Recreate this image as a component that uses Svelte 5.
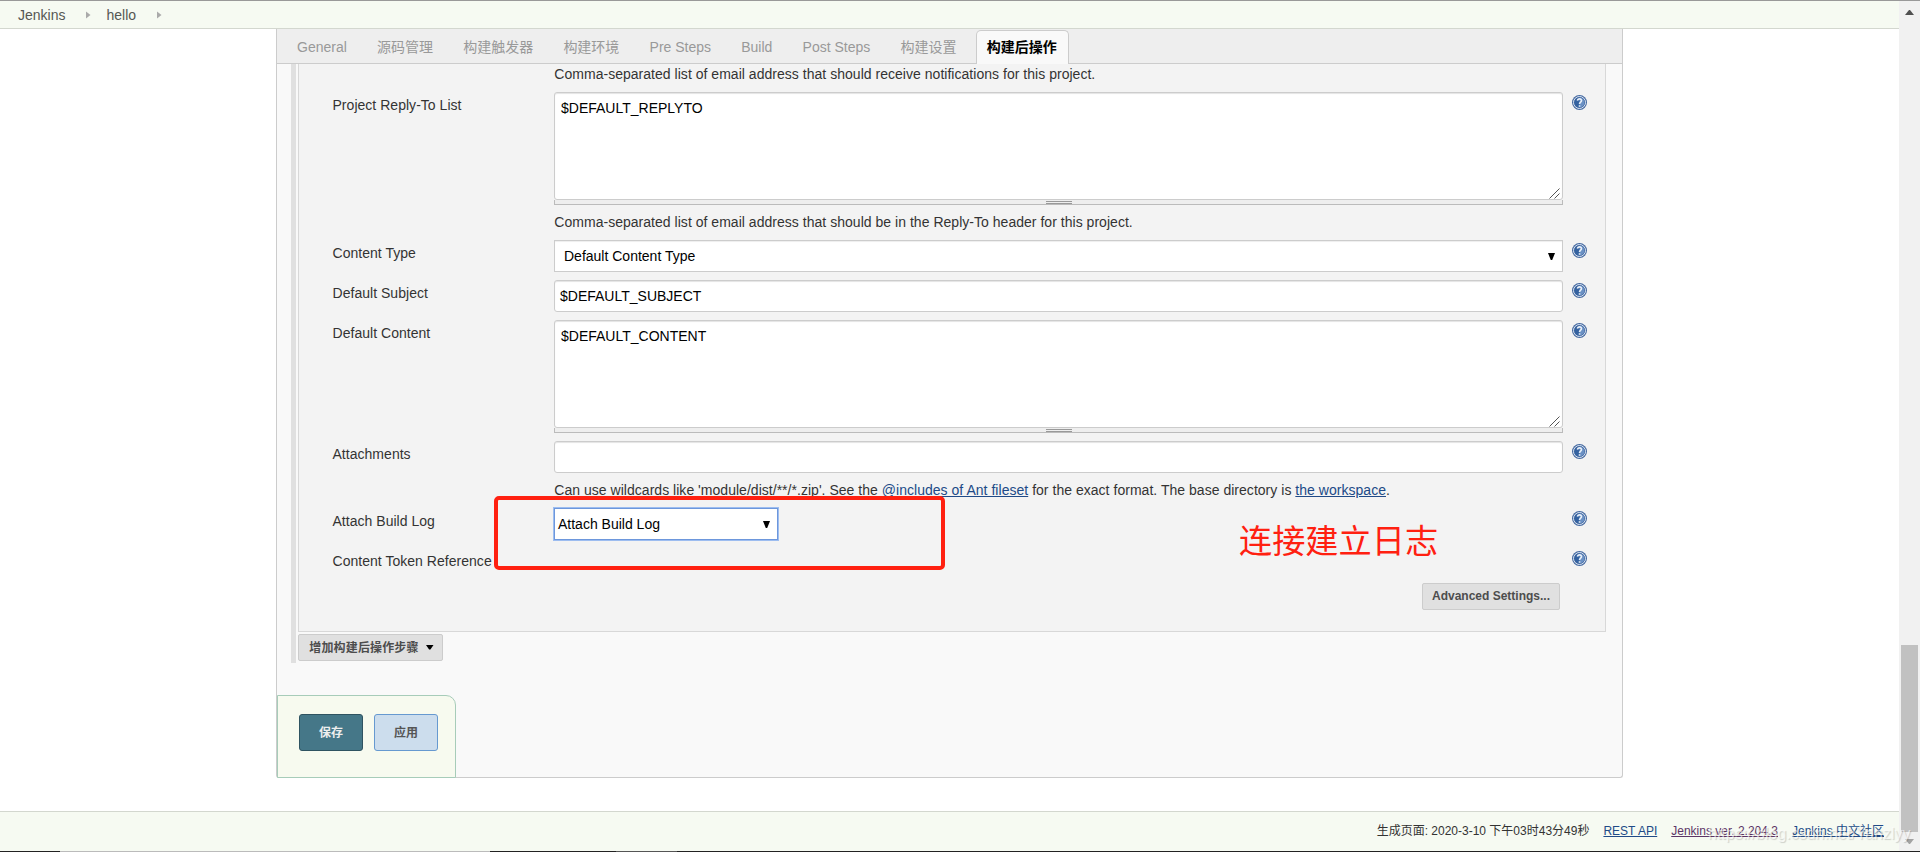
<script>
  const tabs = ['General', '源码管理', '构建触发器', '构建环境', 'Pre Steps', 'Build', 'Post Steps', '构建设置', '构建后操作'];
  const active = '构建后操作';
</script>

{#snippet help()}
  <svg class="help" width="15" height="15" viewBox="0 0 15 15">
    <circle cx="7.5" cy="7.5" r="7.5" fill="#4468a0" />
    <circle cx="7.5" cy="7.5" r="6" fill="none" stroke="#dfe8f3" stroke-width="1" />
    <circle cx="7.5" cy="7.5" r="5" fill="#3462a0" />
    <path d="M7.5 2.5a5 5 0 0 1 0 10z" fill="#6b91c4" />
    <path d="M5.5 5.6C5.6 3.3 9.6 3.2 9.5 5.6C9.4 7.1 7.6 7 7.5 9M7.5 10.2v1.6" fill="none" stroke="#e8eff8" stroke-width="1.6" />
  </svg>
{/snippet}

{#snippet area(value)}
  <div class="textarea">
    <span>{value}</span>
    <svg class="grip" width="11" height="11" viewBox="0 0 11 11">
      <path d="M.5 10.5l10-10M5.5 10.5l5-5" stroke="#555" stroke-width="1" />
    </svg>
  </div>
  <div class="handle"><i></i></div>
{/snippet}

{#snippet arrow()}
  <svg class="arrow" width="7" height="7" viewBox="0 0 7 7"><path d="M0 0h7L4.2 7H2.8z" /></svg>
{/snippet}

<div class="window">
  <div class="page">
    <header>
      <span>Jenkins</span>
      <svg width="5" height="8" viewBox="0 0 5 8"><path d="M0 .5l4.5 3.5L0 7.5z" /></svg>
      <span>hello</span>
      <svg width="5" height="8" viewBox="0 0 5 8"><path d="M0 .5l4.5 3.5L0 7.5z" /></svg>
    </header>

    <main>
      <nav>
        {#each tabs as tab}
          <div class="tab" class:active={tab === active}>{tab}</div>
        {/each}
      </nav>

      <div class="section">
        <div class="card">
          <div class="row intro">
            <div></div>
            <div class="note">Comma-separated list of email address that should receive notifications for this project.</div>
          </div>
          <div class="row reply">
            <div class="label">Project Reply-To List</div>
            <div>
              {@render area('$DEFAULT_REPLYTO')}
              <div class="note">Comma-separated list of email address that should be in the Reply-To header for this project.</div>
            </div>
            {@render help()}
          </div>
          <div class="row">
            <div class="label">Content Type</div>
            <div class="select wide"><span>Default Content Type</span>{@render arrow()}</div>
            {@render help()}
          </div>
          <div class="row">
            <div class="label">Default Subject</div>
            <div class="input">$DEFAULT_SUBJECT</div>
            {@render help()}
          </div>
          <div class="row content">
            <div class="label">Default Content</div>
            <div>{@render area('$DEFAULT_CONTENT')}</div>
            {@render help()}
          </div>
          <div class="row attachments">
            <div class="label">Attachments</div>
            <div>
              <div class="input"></div>
              <div class="note">Can use wildcards like 'module/dist/**/*.zip'. See the <u>@includes of Ant fileset</u> for the exact format. The base directory is <u>the workspace</u>.</div>
            </div>
            {@render help()}
          </div>
          <div class="row">
            <div class="label">Attach Build Log</div>
            <div class="select focused"><span>Attach Build Log</span>{@render arrow()}</div>
            {@render help()}
          </div>
          <div class="row token">
            <div class="label">Content Token Reference</div>
            <div></div>
            {@render help()}
          </div>
          <div class="advanced"><button class="grey">Advanced Settings...</button></div>
        </div>
        <button class="grey add">增加构建后操作步骤<svg width="8" height="5" viewBox="0 0 8 5"><path d="M0 0h7.5L4.4 4.5H3.1z" /></svg></button>
      </div>

      <div class="actions">
        <button class="save">保存</button>
        <button class="apply">应用</button>
      </div>
    </main>

    <footer>
      <span>生成页面: 2020-3-10 下午03时43分49秒</span>
      <u>REST API</u>
      <u class="visited">Jenkins ver. 2.204.3</u>
      <u>Jenkins 中文社区</u>
    </footer>
  </div>

  <div class="scrollbar">
    <svg width="9" height="5" viewBox="0 0 9 5"><path d="M0 5L4 0h1l4 5z" fill="#505050" /></svg>
    <div class="thumb"></div>
    <svg width="9" height="5" viewBox="0 0 9 5"><path d="M0 0h9L5 5H4z" fill="#a3a3a3" /></svg>
  </div>

  <div class="edge"></div>
  <div class="marker"></div>
  <div class="remark">连接建立日志</div>
  <div class="watermark">https://blog.csdn.net/Yanzlyy</div>
</div>

<style>
  :global(body) { overflow: hidden; background: #fff; }
  * { box-sizing: border-box; }
  .window {
    position: relative;
    display: flex;
    width: 1920px;
    height: 852px;
    overflow: hidden;
    border-top: 1px solid #999;
    font: 14px/18px "Liberation Sans", "Noto Sans CJK SC", sans-serif;
    color: #333;
  }
  .page { flex: 1; display: flex; flex-direction: column; }
  header {
    display: flex;
    align-items: center;
    height: 28px;
    padding: 1px 0 0 18px;
    background: #f6faf2;
    border-bottom: 1px solid #d3d7cf;
    color: #555753;
  }
  header svg { margin: 0 16px 0 21px; fill: #aaa; }
  header svg + span { margin-left: -1px; }
  main {
    width: 1347px;
    height: 749px;
    margin-left: 276px;
    display: flex;
    flex-direction: column;
    background: #f9f9f9;
    border: 1px solid #ccc;
    border-top: 0;
    border-radius: 0 0 3px 3px;
  }
  nav {
    display: flex;
    align-items: flex-end;
    gap: 8.2px;
    height: 35px;
    padding-left: 9px;
    background: #eee;
    border-bottom: 1px solid #ccc;
  }
  .tab {
    height: 34px;
    margin-bottom: -1px;
    padding: 7px 10px 0;
    border: 1px solid transparent;
    border-bottom: 0;
    color: #999;
    white-space: nowrap;
  }
  .tab.active {
    padding: 7px 11px 0 10px;
    border-color: #ccc;
    border-radius: 5px 5px 0 0;
    background: #f9f9f9;
    color: #000;
    font-weight: bold;
  }
  .section {
    width: 1315px;
    height: 599px;
    margin-left: 14px;
    border-left: 5px solid #e0e0e0;
    padding-left: 2px;
  }
  .card {
    height: 568px;
    background: #f3f3f3;
    border: 1px solid #d8d8d8;
    border-top: 0;
    margin-bottom: 2px;
  }
  .row {
    display: grid;
    grid-template-columns: 222px 1009px 15px;
    align-items: start;
    height: 40px;
    padding-left: 33px;
  }
  .row.intro { height: 28px; }
  .row.intro .note { margin-top: 1px; }
  .row.reply { height: 148px; }
  .row.content { height: 121px; }
  .row.attachments { height: 67px; }
  .row.token { height: 35px; }
  .label { margin: 4px 0 0 .5px; letter-spacing: .03px; }
  .help { margin: 3px 0 0 9px; overflow: visible; }
  .note { margin: 8px 0 0 .3px; letter-spacing: .028px; white-space: nowrap; }
  u { color: #204a87; }
  .visited { color: #5c3566; }
  .textarea, .input, .select {
    background: #fff;
    border: 1px solid #ccc;
    color: #000;
  }
  .textarea {
    display: flex;
    justify-content: space-between;
    height: 108px;
    padding: 6px 2px 0 6px;
    border-radius: 3px;
    box-shadow: inset 0 1px 1px #e4e4e4;
  }
  .grip { align-self: flex-end; }
  .handle {
    display: flex;
    justify-content: center;
    height: 5px;
    padding-top: 1px;
    background: #eee;
    border: 1px solid #bbb;
    border-top: 0;
  }
  .handle i { width: 26px; height: 3px; border: solid #999; border-width: 1px 0; }
  .input {
    height: 32px;
    padding: 6px 5px;
    border-radius: 3px;
    box-shadow: inset 0 1px 1px #e4e4e4;
  }
  .select {
    display: flex;
    justify-content: space-between;
    align-items: center;
    height: 32px;
    padding: 0 7px 0 9px;
    box-shadow: inset 0 1px 1px #eee;
  }
  .select.focused {
    width: 224px;
    padding: 0 7px 0 3px;
    border-color: #6d97dc;
    box-shadow: 0 0 0 1px #9dbdf0;
  }
  button {
    display: flex;
    align-items: center;
    justify-content: center;
    padding: 0;
    font: bold 12px/16px "Liberation Sans", "Noto Sans CJK SC", sans-serif;
    white-space: nowrap;
  }
  .grey {
    width: 138px;
    height: 27px;
    padding-bottom: 2px;
    background: #e0e0e0;
    border: 1px solid #ccc;
    border-radius: 2px;
    color: #4d4d4d;
  }
  .add { width: 145px; gap: 7px; padding: 0 0 0 2px; letter-spacing: .15px; }
  .advanced { display: flex; justify-content: flex-end; padding-right: 45px; }
  .actions {
    display: flex;
    gap: 11px;
    width: 179px;
    height: 83px;
    margin: auto 0 -1px;
    padding: 18px 0 0 21px;
    background: #f7faef;
    border: 1px solid #a7ccb9;
    border-radius: 0 10px 0 0;
  }
  .actions button { width: 64px; height: 37px; border-radius: 3px; }
  .save { background: #457788; border: 1px solid #2f5361; color: #eee; }
  .apply { background: #ccdded; border: 1px solid #6699d0; color: #555; }
  footer {
    display: flex;
    justify-content: flex-end;
    gap: 14px;
    height: 41px;
    margin-top: auto;
    padding: 11px 15px 0 0;
    background: #f6faf2;
    border-top: 1px solid #d3d7cf;
    font-size: 12px;
    line-height: 17px;
  }
  .scrollbar {
    display: flex;
    flex-direction: column;
    align-items: center;
    width: 21px;
    padding-top: 9px;
    background: #f1f1f1;
  }
  .thumb { width: 17px; height: 187px; margin: 630px 0 7px; background: #c1c1c1; }
  .edge {
    position: absolute;
    left: 0;
    right: 0;
    bottom: 0;
    height: 1px;
    background: linear-gradient(90deg, #222 60px, #bbb 60px 490px, #222 490px 616px, #555 616px 677px, #222 677px);
  }
  .marker {
    position: absolute;
    left: 494px;
    top: 495px;
    width: 451px;
    height: 74px;
    border: 4px solid #ff2010;
    border-radius: 5px;
  }
  .remark {
    position: absolute;
    left: 1239px;
    top: 518px;
    font: 33.2px/40px "Noto Sans CJK SC", sans-serif;
    color: #ff2010;
  }
  .watermark {
    position: absolute;
    left: 1708px;
    top: 822px;
    font-size: 16px;
    line-height: 22px;
    color: rgba(255, 255, 255, .6);
    text-shadow: 1px 1px 1px rgba(0, 0, 0, .17);
  }
</style>
